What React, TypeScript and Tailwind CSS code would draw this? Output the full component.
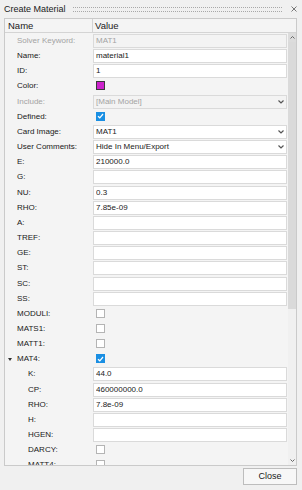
import React from 'react';

type Row = {
  label: string;
  kind: 'text' | 'select' | 'check' | 'color';
  value?: string;
  checked?: boolean;
  disabled?: boolean;
  indent?: boolean;
  expander?: boolean;
};

const rows: Row[] = [
  { label: 'Solver Keyword:', kind: 'text', value: 'MAT1', disabled: true },
  { label: 'Name:', kind: 'text', value: 'material1' },
  { label: 'ID:', kind: 'text', value: '1' },
  { label: 'Color:', kind: 'color' },
  { label: 'Include:', kind: 'select', value: '[Main Model]', disabled: true },
  { label: 'Defined:', kind: 'check', checked: true },
  { label: 'Card Image:', kind: 'select', value: 'MAT1' },
  { label: 'User Comments:', kind: 'select', value: 'Hide In Menu/Export' },
  { label: 'E:', kind: 'text', value: '210000.0' },
  { label: 'G:', kind: 'text', value: '' },
  { label: 'NU:', kind: 'text', value: '0.3' },
  { label: 'RHO:', kind: 'text', value: '7.85e-09' },
  { label: 'A:', kind: 'text', value: '' },
  { label: 'TREF:', kind: 'text', value: '' },
  { label: 'GE:', kind: 'text', value: '' },
  { label: 'ST:', kind: 'text', value: '' },
  { label: 'SC:', kind: 'text', value: '' },
  { label: 'SS:', kind: 'text', value: '' },
  { label: 'MODULI:', kind: 'check' },
  { label: 'MATS1:', kind: 'check' },
  { label: 'MATT1:', kind: 'check' },
  { label: 'MAT4:', kind: 'check', checked: true, expander: true },
  { label: 'K:', kind: 'text', value: '44.0', indent: true },
  { label: 'CP:', kind: 'text', value: '460000000.0', indent: true },
  { label: 'RHO:', kind: 'text', value: '7.8e-09', indent: true },
  { label: 'H:', kind: 'text', value: '', indent: true },
  { label: 'HGEN:', kind: 'text', value: '', indent: true },
  { label: 'DARCY:', kind: 'check', indent: true },
  { label: 'MATT4:', kind: 'check', indent: true },
];

function Chevron() {
  return (
    <svg width="6" height="4" viewBox="0 0 6 4" className="shrink-0">
      <path d="M0.5 0.5 L3 3 L5.5 0.5" fill="none" stroke="#555" strokeWidth="1.2" />
    </svg>
  );
}

function Value({ row }: { row: Row }) {
  if (row.kind === 'check') {
    return row.checked ? (
      <div className="ml-[3px] mt-[2px] w-[9px] h-[9px] bg-[#1a8fe3] flex items-center justify-center">
        <svg width="7" height="6" viewBox="0 0 7 6">
          <path d="M1 3.2 L2.8 4.8 L6 1" fill="none" stroke="#fff" strokeWidth="1.2" />
        </svg>
      </div>
    ) : (
      <div className="ml-[3px] mt-[2px] w-[9px] h-[9px] bg-white border border-[#b4b4b4]" />
    );
  }
  if (row.kind === 'color') {
    return <div className="ml-[3px] mt-[2px] w-[9px] h-[9px] bg-[#cc22cc] border border-[#3a3a3a]" />;
  }
  return (
    <div
      className={`h-[14px] mr-[1px] flex items-center pl-[2px] pr-[2px] border border-[#dadada] text-[8px] leading-none ${
        row.disabled ? 'bg-[#f3f3f3] text-[#a3a3a3]' : 'bg-white text-[#1a1a1a]'
      }`}
    >
      <span className="flex-1 whitespace-nowrap overflow-hidden">{row.value}</span>
      {row.kind === 'select' && <Chevron />}
    </div>
  );
}

export default function App() {
  return (
    <div className="w-[302px] h-[490px] bg-[#f0f0f0] flex flex-col overflow-hidden font-['Liberation_Sans',Arial,sans-serif] text-[#1a1a1a]">
      {/* title bar */}
      <div className="h-[18px] flex items-center pl-[4px] pr-[5px] gap-[7px]">
        <span className="text-[9px] leading-none whitespace-nowrap">Create Material</span>
        <div className="flex-1 h-[5px] border-y border-dotted border-[#a8a8a8]" />
        <svg width="6" height="6" viewBox="0 0 6 6" className="ml-[2px]">
          <path d="M0.5 0.5 L5.5 5.5 M5.5 0.5 L0.5 5.5" stroke="#777" strokeWidth="1" />
        </svg>
      </div>

      {/* property panel */}
      <div className="ml-[4px] w-[293px] h-[448px] border border-[#cacaca] bg-[#f4f4f4] flex flex-col">
        <div className="h-[14px] flex border-b border-[#d4d4d4] text-[9.5px] leading-none">
          <div className="w-[88px] border-r border-[#d4d4d4] flex items-center pl-[3px]">Name</div>
          <div className="flex-1 flex items-center pl-[2px]">Value</div>
        </div>

        <div className="flex-1 flex overflow-hidden">
          <div className="flex-1 pt-[1px] overflow-hidden">
            {rows.map((row, i) => (
              <div key={i} className="h-[15.17px] flex">
                <div
                  className={`w-[88px] shrink-0 h-[14px] flex items-center text-[8px] leading-none whitespace-nowrap ${
                    row.indent ? 'pl-[23px]' : 'pl-[12px]'
                  } ${row.disabled ? 'text-[#a3a3a3]' : 'text-[#202020]'}`}
                >
                  {row.expander && (
                    <svg width="4" height="3" viewBox="0 0 4 3" className="-ml-[9px] mr-[5px]">
                      <path d="M0 0 L4 0 L2 3 Z" fill="#333" />
                    </svg>
                  )}
                  {row.label}
                </div>
                <div className="flex-1">
                  <Value row={row} />
                </div>
              </div>
            ))}
          </div>

          {/* scrollbar */}
          <div className="w-[8px] flex flex-col bg-[#f0f0f0]">
            <div className="h-[9px] flex items-center justify-center bg-[#dcdcdc]">
              <svg width="5" height="3" viewBox="0 0 5 3">
                <path d="M0.5 2.5 L2.5 0.5 L4.5 2.5" fill="none" stroke="#666" strokeWidth="1" />
              </svg>
            </div>
            <div className="h-[267px] bg-[#dadada]" />
            <div className="flex-1" />
            <div className="h-[10px] flex items-center justify-center">
              <svg width="5" height="3" viewBox="0 0 5 3">
                <path d="M0.5 0.5 L2.5 2.5 L4.5 0.5" fill="none" stroke="#666" strokeWidth="1" />
              </svg>
            </div>
          </div>
        </div>
      </div>

      {/* footer */}
      <div className="flex-1 flex justify-end items-start pt-[2px] pr-[5px]">
        <button className="w-[54px] h-[17px] border border-[#bdbdbd] bg-[#f7f7f7] text-[9px] leading-none text-[#1a1a1a]">
          Close
        </button>
      </div>
    </div>
  );
}
